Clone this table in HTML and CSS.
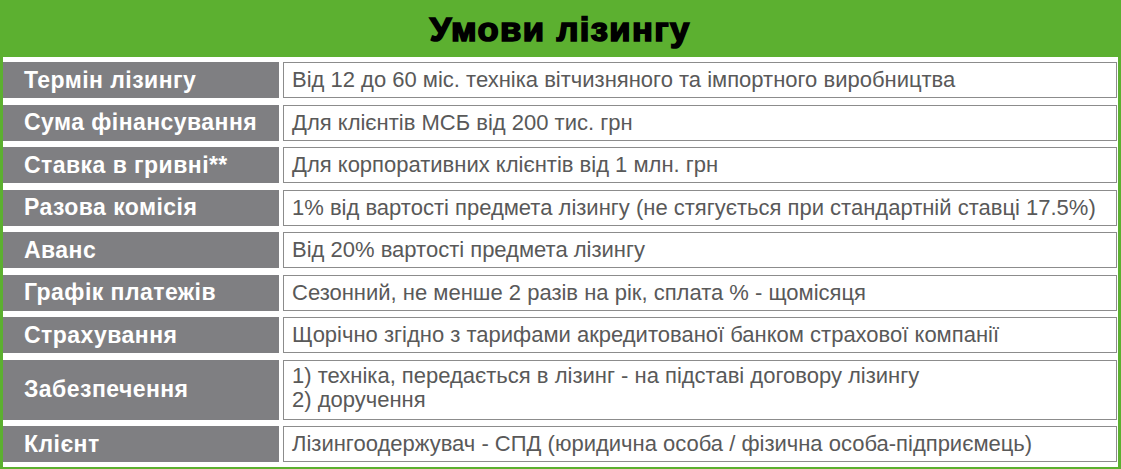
FILE: index.html
```html
<!DOCTYPE html>
<html lang="uk">
<head>
<meta charset="utf-8">
<title>Умови лізингу</title>
<link rel="stylesheet" href="styles.css">
</head>
<body>
<div class="frame">
  <div class="header"><h1 class="title">Умови лізингу</h1></div>
  <div class="panel">
    <div class="row"><div class="label">Термін лізингу</div><div class="value">Від 12 до 60 міс. техніка вітчизняного та імпортного виробництва</div></div>
    <div class="row"><div class="label">Сума фінансування</div><div class="value">Для клієнтів МСБ від 200 тис. грн</div></div>
    <div class="row"><div class="label">Ставка в гривні**</div><div class="value">Для корпоративних клієнтів від 1 млн. грн</div></div>
    <div class="row"><div class="label">Разова комісія</div><div class="value">1% від вартості предмета лізингу (не стягується при стандартній ставці 17.5%)</div></div>
    <div class="row"><div class="label">Аванс</div><div class="value">Від 20% вартості предмета лізингу</div></div>
    <div class="row"><div class="label">Графік платежів</div><div class="value">Сезонний, не менше 2 разів на рік, сплата % - щомісяця</div></div>
    <div class="row"><div class="label">Страхування</div><div class="value">Щорічно згідно з тарифами акредитованої банком страхової компанії</div></div>
    <div class="row row-tall"><div class="label">Забезпечення</div><div class="value value-multi"><span>1) техніка, передається в лізинг - на підставі договору лізингу</span><span>2) доручення</span></div></div>
    <div class="row"><div class="label">Клієнт</div><div class="value">Лізингоодержувач - СПД (юридична особа / фізична особа-підприємець)</div></div>
  </div>
</div>
</body>
</html>
```

FILE: styles.css
```css
* { box-sizing: border-box; }
html, body { margin: 0; padding: 0; background: #ffffff; }
.frame {
  width: 1121px;
  height: 469px;
  background: #5cb030;
  display: flex;
  flex-direction: column;
  padding: 0 3px 2px 3px;
  font-family: "Liberation Sans", Arial, sans-serif;
}
.header {
  height: 57px;
  display: flex;
  align-items: center;
  justify-content: center;
  flex: none;
}
.title {
  margin: 0;
  font-size: 33px;
  font-weight: 700;
  color: #000;
  -webkit-text-stroke: 1.6px #000;
  letter-spacing: 1.3px;
  transform: scaleX(1.05);
  line-height: 1;
  padding-top: 2px;
}
.panel {
  flex: 1;
  background: #fff;
  padding: 5px 1px 0 0;
  display: flex;
  flex-direction: column;
  gap: 6.5px;
}
.row {
  display: flex;
  height: 36px;
  gap: 4px;
}
.row-tall { height: 60px; }
.label {
  width: 276px;
  flex: none;
  background: #7f7f82;
  color: #fff;
  font-weight: 700;
  font-size: 23px;
  letter-spacing: 0.45px;
  display: flex;
  align-items: center;
  padding-left: 21px;
}
.value {
  flex: 1;
  border: 1.5px solid #8c8c8c;
  color: #595959;
  font-size: 22px;
  display: flex;
  align-items: center;
  padding-left: 8px;
}
.value-multi {
  flex-direction: column;
  align-items: flex-start;
  justify-content: flex-start;
  padding-top: 3px;
  line-height: 24px;
}
```
